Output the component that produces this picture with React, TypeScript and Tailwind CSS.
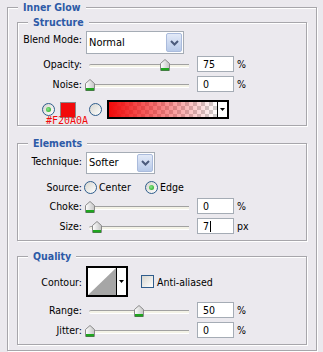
import React from "react";

const Label = ({ children, className = "" }: { children: React.ReactNode; className?: string }) => (
  <div className={`w-[64px] shrink-0 text-right ${className}`}>{children}</div>
);

const Legend = ({ children }: { children: React.ReactNode }) => (
  <legend className="ml-[10px] h-[13px] bg-[#ebe9ee] px-[5px] text-[10.5px] font-bold leading-[13px] text-[#2d5aa7]">
    {children}
  </legend>
);

const fs =
  "border border-[#a7a6ab] shadow-[inset_1px_1px_0_#ffffff,1px_1px_0_#ffffff]";

const Thumb = ({ cx }: { cx: number }) => (
  <svg
    width="10"
    height="12"
    viewBox="0 0 10 12"
    className="absolute top-[3px]"
    style={{ left: cx - 86 - 5 }}
  >
    <defs>
      <linearGradient id="thumbg" x1="0" y1="0" x2="1" y2="0">
        <stop offset="0" stopColor="#ffffff" />
        <stop offset="1" stopColor="#c4c4c4" />
      </linearGradient>
    </defs>
    <path d="M5 0.5 L9.5 4.5 L9.5 11.5 L0.5 11.5 L0.5 4.5 Z" fill="url(#thumbg)" stroke="#8a8a8a" />
    <rect x="1" y="9" width="8" height="2" fill="#1fa51f" />
    <rect x="1" y="11" width="8" height="0.6" fill="#137a13" />
  </svg>
);

const Slider = ({ cx }: { cx: number }) => (
  <div className="relative ml-[4px] h-[16px] w-[103px] shrink-0">
    <div className="ml-[3px] mt-[8px] h-[4px] w-[100px] rounded-l-[2px] border-t border-b border-t-[#a1a1a1] border-b-[#ffffff] bg-[#f3f2e6]" />
    <Thumb cx={cx} />
  </div>
);

const Input = ({ value, caret }: { value: string; caret?: boolean }) => (
  <div className="ml-[8px] flex h-[16px] w-[37px] shrink-0 items-center border border-[#a5acb5] bg-white pl-[5px]">
    <span>{value}</span>
    {caret && <span className="ml-[1px] h-[11px] w-[1px] bg-black" />}
  </div>
);

const Chevron = () => (
  <svg width="9" height="6" viewBox="0 0 9 6">
    <path d="M1 1 L4.5 4.5 L8 1" fill="none" stroke="#4b5b7c" strokeWidth="2" />
  </svg>
);

const Select = ({ value, w, h }: { value: string; w: string; h: string }) => (
  <div className={`ml-[4px] flex ${w} ${h} shrink-0 items-stretch border border-[#a5acb5] bg-white`}>
    <div className="flex flex-1 items-center pl-[2px] text-[11px]">{value}</div>
    <div className="m-[1px] flex w-[16px] items-center justify-center rounded-[2px] border border-[#aabbdc] bg-[linear-gradient(#e3eaf8,#b8cae9)]">
      <Chevron />
    </div>
  </div>
);

const Radio = ({ checked }: { checked?: boolean }) => (
  <span className="flex h-[13px] w-[13px] shrink-0 items-center justify-center rounded-full border border-[#2f5d8c] bg-[linear-gradient(135deg,#d6d5ce,#ffffff)]">
    {checked && (
      <span className="h-[5px] w-[5px] rounded-full bg-[radial-gradient(circle_at_40%_40%,#8ae68a,#17a017)]" />
    )}
  </span>
);

const DownTri = () => (
  <svg width="5" height="3" viewBox="0 0 5 3">
    <path d="M0 0 L5 0 L2.5 3 Z" fill="#000000" />
  </svg>
);

export default function App() {
  return (
    <div className="h-[352px] w-[323px] overflow-hidden bg-[#ebe9ee] pl-[7px] pt-[1px] font-['DejaVu_Sans_Condensed','DejaVu_Sans',sans-serif] text-[10.5px] leading-[12px] text-black">
      <fieldset className={`w-[310px] ${fs}`}>
        <Legend>Inner Glow</Legend>
        <div className="pb-[5px] pl-[9px]">
          {/* Structure */}
          <fieldset className={`mt-[2px] w-[290px] ${fs}`}>
            <Legend>Structure</Legend>
            <div className="flex flex-col">
              <div className="mt-[2px] flex items-start">
                <Label className="mt-[2px]">Blend Mode:</Label>
                <Select value="Normal" w="w-[98px]" h="h-[23px]" />
              </div>
              <div className="mt-[2px] flex h-[16px] items-center">
                <Label>Opacity:</Label>
                <Slider cx={164.5} />
                <Input value="75" />
                <span className="ml-[3px]">%</span>
              </div>
              <div className="mt-[4px] flex h-[16px] items-center">
                <Label>Noise:</Label>
                <Slider cx={89.5} />
                <Input value="0" />
                <span className="ml-[3px]">%</span>
              </div>
              <div className="mt-[8px] flex h-[19px] items-center pl-[24px]">
                <Radio checked />
                <div className="ml-[5px] h-[16px] w-[16px] border border-[#8a8a8a] bg-[#f20a0a]" />
                <div className="ml-[13px]">
                  <Radio />
                </div>
                <div className="ml-[5px] flex h-[19px] w-[122px] border-2 border-black">
                  <div className="flex-1 bg-[linear-gradient(to_right,#f20a0a,rgba(242,10,10,0)),repeating-conic-gradient(#cfcfcf_0_25%,#ffffff_0_50%)] bg-[length:100%_100%,8px_8px]" />
                  <div className="flex w-[10px] items-center justify-center border-l border-black bg-white">
                    <DownTri />
                  </div>
                </div>
              </div>
              <div className="-mt-[2px] h-[8px] pl-[28px] font-['DejaVu_Sans_Mono',monospace] text-[10px] leading-[8px] text-[#f20a0a]">
                #F20A0A
              </div>
            </div>
          </fieldset>

          {/* Elements */}
          <fieldset className={`mt-[11px] w-[290px] ${fs}`}>
            <Legend>Elements</Legend>
            <div className="flex flex-col pb-[6px]">
              <div className="mt-[2px] flex items-start">
                <Label className="mt-[3px]">Technique:</Label>
                <Select value="Softer" w="w-[69px]" h="h-[22px]" />
              </div>
              <div className="mt-[6px] flex h-[14px] items-center">
                <Label>Source:</Label>
                <div className="ml-[2px] flex w-[61px] items-center">
                  <Radio />
                  <span className="ml-[2px]">Center</span>
                </div>
                <Radio checked />
                <span className="ml-[2px]">Edge</span>
              </div>
              <div className="mt-[4px] flex h-[16px] items-center">
                <Label>Choke:</Label>
                <Slider cx={90} />
                <Input value="0" />
                <span className="ml-[3px]">%</span>
              </div>
              <div className="mt-[4px] flex h-[16px] items-center">
                <Label>Size:</Label>
                <Slider cx={97} />
                <Input value="7" caret />
                <span className="ml-[3px]">px</span>
              </div>
            </div>
          </fieldset>

          {/* Quality */}
          <fieldset className={`mt-[9px] w-[290px] ${fs}`}>
            <Legend>Quality</Legend>
            <div className="flex flex-col pb-[6px]">
              <div className="mt-[3px] flex h-[31px] items-center">
                <Label>Contour:</Label>
                <div className="ml-[4px] flex h-[31px] w-[42px] border-2 border-black bg-white">
                  <svg width="28" height="27" viewBox="0 0 28 27" className="block">
                    <rect x="0" y="0" width="28" height="27" fill="#ffffff" />
                    <path d="M0 27 L28 0 L28 27 Z" fill="#a6a6a6" />
                  </svg>
                  <div className="flex flex-1 items-center justify-center border-l border-black bg-white">
                    <DownTri />
                  </div>
                </div>
                <span className="ml-[13px] h-[13px] w-[13px] shrink-0 border border-[#2f5d8c] bg-[linear-gradient(135deg,#d6d5ce,#ffffff)]" />
                <span className="ml-[3px]">Anti-aliased</span>
              </div>
              <div className="mt-[5px] flex h-[16px] items-center">
                <Label>Range:</Label>
                <Slider cx={138.5} />
                <Input value="50" />
                <span className="ml-[3px]">%</span>
              </div>
              <div className="mt-[4px] flex h-[16px] items-center">
                <Label>Jitter:</Label>
                <Slider cx={89.5} />
                <Input value="0" />
                <span className="ml-[3px]">%</span>
              </div>
            </div>
          </fieldset>
        </div>
      </fieldset>
    </div>
  );
}
